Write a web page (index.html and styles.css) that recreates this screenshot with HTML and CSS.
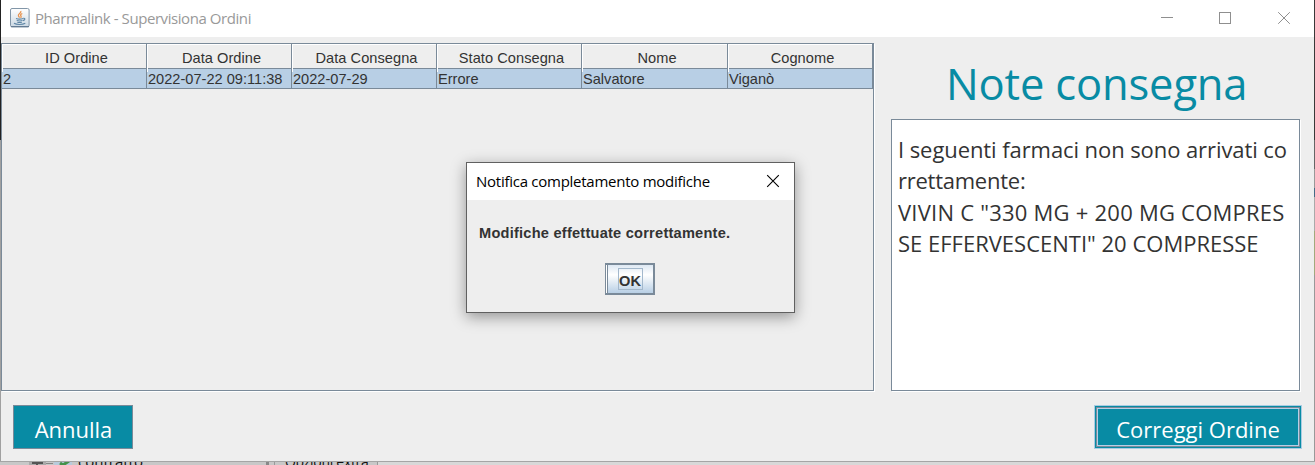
FILE: index.html
```html
<!DOCTYPE html>
<html lang="it">
<head>
<meta charset="utf-8">
<title>Pharmalink - Supervisiona Ordini</title>
<link rel="stylesheet" href="styles.css">
</head>
<body>
<div class="desktop">
  <div class="frame">
    <main class="window">
      <header class="titlebar">
        <svg class="java" width="20" height="20" viewBox="0 0 20 20">
          <defs><linearGradient id="tile" x2="0" y2="1"><stop stop-color="#fff"/><stop offset="1" stop-color="#cbd8e3"/></linearGradient></defs>
          <rect x=".5" y=".5" width="18.6" height="18.3" rx="1.5" fill="url(#tile)" stroke="#8296a8"/>
          <path d="M1 18.7H19" stroke="#58718a"/>
          <path d="M10.800 3c1 2-3 2.800-2.400 4.600.2.800 1 1.400 1.200 2M12.300 5.500c-2 .9-2 1.600-1.300 2.600.4.700.1 1.300-.5 1.700" fill="none" stroke="#e8934f" stroke-width="1.300"/>
          <path d="M6 10.500c2 .7 5 .7 7.200 0M6.700 12.500c2 .6 4 .6 5.800 0M7.300 14.200c1.500.5 3 .5 4.600 0M4 15.300c2.500 1.500 8.500 1.500 11.300 0M13.300 10.300c2.300-.3 2 1.700-.3 2.300" fill="none" stroke="#5f87a6" stroke-width="1.100"/>
        </svg>
        <span class="caption">Pharmalink - Supervisiona Ordini</span>
        <svg class="controls" width="132" height="14" viewBox="0 0 132 14" fill="none" stroke="#8f8f8f">
          <path d="M0 6.500H12"/><rect x="58.500" y="1.500" width="11" height="11"/>
          <path d="M117.200 1.200l11.600 11.600M128.800 1.200l-11.600 11.600"/>
        </svg>
      </header>
      <div class="content">
        <section class="orders">
          <div class="row head">
            <span>ID Ordine</span><span>Data Ordine</span><span>Data Consegna</span><span>Stato Consegna</span><span>Nome</span><span>Cognome</span>
          </div>
          <div class="row selected">
            <span>2</span><span>2022-07-22 09:11:38</span><span>2022-07-29</span><span>Errore</span><span>Salvatore</span><span>Viganò</span>
          </div>
        </section>
        <section class="notes">
          <h1>Note consegna</h1>
          <div class="note">
            <div class="l1">I seguenti farmaci non sono arrivati co</div>
            <div class="l2">rrettamente:</div>
            <div class="l3">VIVIN C "330 MG + 200 MG COMPRES</div>
            <div class="l4">SE EFFERVESCENTI" 20 COMPRESSE</div>
          </div>
        </section>
      </div>
      <footer class="actions">
        <button class="btn cancel">Annulla</button>
        <button class="btn fix"><span>Correggi Ordine</span></button>
      </footer>
    </main>
    <div class="edge"></div>
  </div>
  <div class="behind">
    <svg class="tree" width="46" height="4" viewBox="0 0 46 4">
      <rect width="17" height="4" fill="#aaa"/><path d="M3 1H14M8 0V4" stroke="#555" stroke-width="2"/><path d="M17 1.500H24" stroke="#888"/>
      <rect x="25" width="18" height="4" fill="#b8cbdc"/><path d="M31 1l3 2 6-4" fill="none" stroke="#45914a" stroke-width="3"/>
    </svg>
    <span class="tree-label">contratto</span>
    <span class="divider"></span>
    <span class="extra">Opzioni extra</span>
    <span class="rest"></span>
  </div>
  <div class="dialog">
    <div class="dialog-title"><span>Notifica completamento modifiche</span>
      <svg width="14" height="14" viewBox="0 0 14 14" stroke="#000" stroke-width="1.100"><path d="M1.200 1.200l11.600 11.600M12.800 1.200L1.200 12.800"/></svg>
    </div>
    <div class="dialog-body">
      <p>Modifiche effettuate correttamente.</p>
      <button class="ok"><span>OK</span></button>
    </div>
  </div>
</div>
</body>
</html>
```
FILE: styles.css
```css
* { box-sizing: border-box; }
body { margin: 0; font-family: "Liberation Sans", Arial, sans-serif; }
button { font: inherit; border-radius: 0; padding: 0; margin: 0; }
.desktop { position: relative; width: 1315px; height: 465px; overflow: hidden; background: #c8c8c8; }
.frame { display: flex; height: 462px; border-bottom: 1px solid #a5a5a5; background: linear-gradient(#222 140px, #a0a0a0 140px); padding-left: 1px; }
.window { width: 1313px; background: #eee; display: flex; flex-direction: column; }
.edge { width: 1px; background: linear-gradient(#393939 140px, #666 140px 169px, #999 169px 188px, #456b86 188px 197px, #aaa 197px 231px, #a1aa7d 231px 275px, #999 275px); }
.titlebar { height: 37px; background: #fff; display: flex; align-items: center; padding: 0 21px 0 9px; }
.java { margin-top: -2px; }
.caption { margin-left: 5px; font: 15px/20px "Open Sans", sans-serif; color: #999; flex: 1; white-space: nowrap; letter-spacing: -.43px; padding-bottom: 1px; }
.controls { margin-top: -1px; }
.content { height: 355px; padding-top: 6px; display: flex; }
.orders { width: 873px; height: 348px; border: 1px solid #7a8a99; box-shadow: 1px 1px #fff; }
.row { display: grid; grid-template-columns: 145px 145px 145px 145px 146px 145px; height: 20px; font-size: 14.600px; color: #333; border-bottom: 1px solid #7a8a99; width: 871px; }
.row span { border-right: 1px solid #7a8a99; padding-left: 1px; line-height: 20px; white-space: nowrap; }
.row.head { height: 25px; }
.head span { text-align: center; padding: 0 0 0 5px; line-height: 28px; box-shadow: inset 1px 1px #fff; letter-spacing: .05px; }
.selected { background: #b8cfe5; }
.notes { width: 409px; margin-left: 17px; }
h1 { height: 76px; margin: 0; padding-left: 55px; font: 43.500px/82px "Open Sans", sans-serif; letter-spacing: -.16px; color: #088ba4; white-space: nowrap; }
.note { height: 272px; background: #fff; border: 1px solid #7a8a99; box-shadow: 1px 1px #fff; padding: 14px 6px; font: 22px/31.250px "Open Sans", sans-serif; color: #333; white-space: nowrap; }
.l1 { letter-spacing: -.08px; }
.l2 { letter-spacing: -.25px; }
.l3 { letter-spacing: .23px; }
.actions { display: flex; justify-content: space-between; padding: 13px 12px 0 12px; }
.btn { height: 44px; background: #088ba4; border: 1px solid #7a8a99; color: #fff; font: 22px/46px "Open Sans", sans-serif; white-space: nowrap; }
.cancel { width: 120px; padding-left: 1px; }
.fix { width: 208px; border-color: #a9cce2; padding: 1px; }
.fix span { display: block; height: 40px; border: 1px solid #7a8a99; box-shadow: inset 0 0 0 1px #b8cfe5; line-height: 42px; }
.behind { display: flex; height: 3px; overflow: hidden; padding-left: 29px; font: 15px/16px "Open Sans", sans-serif; color: #111; }
.tree-label { margin: -9px 0 0 3px; width: 188px; }
.divider { width: 3px; background: #888; }
.extra { margin-left: 5px; border: solid #999; border-width: 0 1px; padding: 0 10px; width: 104px; font-size: 14px; line-height: 0; letter-spacing: -.3px; white-space: nowrap; }
.rest { flex: 1; background: #d8d8d8; }
.dialog { position: absolute; left: 466px; top: 162px; width: 329px; height: 151px; border: 1px solid #606060; background: #eee; box-shadow: 0 4px 14px rgba(0,0,0,.38); }
.dialog-title { height: 37px; background: #fff; display: flex; justify-content: space-between; padding: 0 14px 0 9px; font: 15px/37px "Open Sans", sans-serif; color: #000; letter-spacing: -.26px; white-space: nowrap; }
.dialog-title svg { margin-top: 11px; }
.dialog-body p { margin: 0; padding: 24px 0 0 12px; font-weight: bold; font-size: 14.600px; letter-spacing: .23px; line-height: 18px; color: #333; }
.ok { display: flex; align-items: center; justify-content: center; width: 50px; height: 32px; margin: 21px 0 0 138px; border: 2px solid #7a8a99; border-left: 1px solid #7a8a99; box-shadow: inset 1px 0 #fff, inset 2px 0 #7a8a99; background: linear-gradient(#dde8f3, #fff 35%, #b8cfe5); }
.ok span { width: 25px; height: 22px; margin-left: 1px; border: 1px solid #a3b8cc; font-weight: bold; font-size: 14.600px; line-height: 24px; color: #333; display: flex; justify-content: center; }
```
